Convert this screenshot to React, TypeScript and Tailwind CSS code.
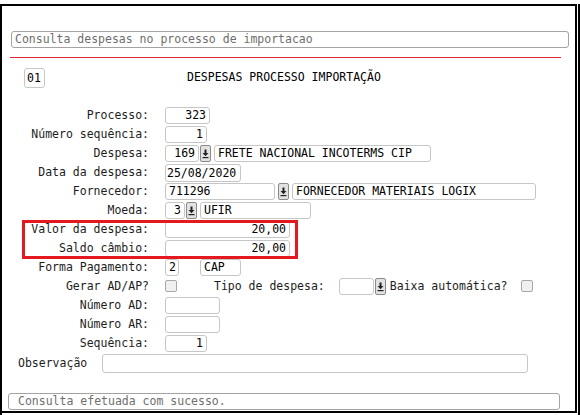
import React from "react";

const Field = ({ w, right, children }: { w: string; right?: boolean; children?: React.ReactNode }) => (
    <div className={`h-[17px] shrink-0 overflow-hidden whitespace-nowrap rounded-[3px] border border-[#c6c6c6] bg-white px-[3px] leading-[15px] text-black ${w} ${right ? "text-right" : "text-left"}`}>
        {children}
    </div>
);

const Drop = () => (
    <div className="flex h-[17px] w-[11px] shrink-0 items-center justify-center rounded-[2px] border border-[#8a8a8a] bg-[#e2e2e2]">
        <svg width="7" height="10" viewBox="0 0 7 10">
            <rect x="2.5" y="0.5" width="2" height="3.5" fill="#222" />
            <path d="M0.5 4 L6.5 4 L3.5 7.2 Z" fill="#222" />
            <rect x="0.5" y="8" width="6" height="1.2" fill="#222" />
        </svg>
    </div>
);

const Check = () => <div className="h-[12px] w-[12px] shrink-0 rounded-[2px] border border-[#a8a8a8] bg-[#f0f0f0]" />;

const Row = ({ label, children }: { label: string; children?: React.ReactNode }) => (
    <div className="flex h-[19px] items-start">
        <div className="w-[147px] shrink-0 text-right leading-[17px] text-[#1d1d1d]">{label}</div>
        <div className="ml-[16px] flex items-start">{children}</div>
    </div>
);

export default function App() {
    return (
        <div className="h-[415px] w-[580px] border-x-2 border-black bg-white font-['DejaVu_Sans_Mono',monospace] text-[11.5px]">
            <div className="mr-[1px] mt-[4px] flex h-[409px] flex-col border-y-2 border-r-2 border-black">
                <div className="ml-[9px] mr-[6px] mt-[25px] h-[17px] rounded-[3px] border border-[#a3a3a3] px-[3px] leading-[15px] text-[#6e6e6e]">
                    Consulta despesas no processo de importacao
                </div>
                <div className="ml-[8px] mt-[9px] h-px w-[551px] bg-[#e0262c]" />

                <div className="mt-[10px] flex items-center">
                    <div className="ml-[22px] h-[20px] w-[21px] rounded-[3px] border border-[#c6c6c6] px-[2px] leading-[18px] text-black">01</div>
                    <div className="ml-[142px] text-black">DESPESAS PROCESSO IMPORTAÇÃO</div>
                </div>

                <div className="mt-[19px] flex flex-col">
                    <Row label="Processo:">
                        <Field w="w-[45px]" right>323</Field>
                    </Row>
                    <Row label="Número sequência:">
                        <Field w="w-[42px]" right>1</Field>
                    </Row>
                    <Row label="Despesa:">
                        <Field w="w-[34px]" right>169</Field>
                        <div className="ml-[1px]"><Drop /></div>
                        <div className="ml-[3px]"><Field w="w-[217px]">FRETE NACIONAL INCOTERMS CIP</Field></div>
                    </Row>
                    <Row label="Data da despesa:">
                        <div className="h-[18px] w-[76px] rounded-[3px] border border-[#c6c6c6] px-[1px] leading-[16px] text-black">25/08/2020</div>
                    </Row>
                    <Row label="Fornecedor:">
                        <Field w="w-[110px]">711296</Field>
                        <div className="ml-[3px]"><Drop /></div>
                        <div className="ml-[3px]"><Field w="w-[244px]">FORNECEDOR MATERIAIS LOGIX</Field></div>
                    </Row>
                    <Row label="Moeda:">
                        <Field w="w-[20px]" right>3</Field>
                        <div className="ml-[1px]"><Drop /></div>
                        <div className="ml-[3px]"><Field w="w-[111px]">UFIR</Field></div>
                    </Row>
                    <div className="relative">
                        <Row label="Valor da despesa:">
                            <Field w="w-[125px]" right>20,00</Field>
                        </Row>
                        <Row label="Saldo câmbio:">
                            <Field w="w-[125px]" right>20,00</Field>
                        </Row>
                        <div className="absolute left-[20px] top-[-1px] h-[39px] w-[276px] border-[3px] border-[#e3191f]" />
                    </div>
                    <Row label="Forma Pagamento:">
                        <Field w="w-[14px]">2</Field>
                        <div className="ml-[21px]"><Field w="w-[41px]">CAP</Field></div>
                    </Row>
                    <Row label="Gerar AD/AP?">
                        <div className="mt-[2px]"><Check /></div>
                        <div className="ml-[37px] leading-[17px] text-[#1d1d1d]">Tipo de despesa:</div>
                        <div className="ml-[14px]"><Field w="w-[35px]" /></div>
                        <div className="ml-[1px]"><Drop /></div>
                        <div className="ml-[4px] leading-[17px] text-[#1d1d1d]">Baixa automática?</div>
                        <div className="ml-[14px] mt-[2px]"><Check /></div>
                    </Row>
                    <Row label="Número AD:">
                        <Field w="w-[55px]" />
                    </Row>
                    <Row label="Número AR:">
                        <Field w="w-[55px]" />
                    </Row>
                    <Row label="Sequência:">
                        <Field w="w-[42px]" right>1</Field>
                    </Row>
                    <div className="flex h-[19px] items-center">
                        <div className="ml-[16px] w-[84px] text-[#1d1d1d]">Observação</div>
                        <div className="h-[19px] w-[426px] rounded-[3px] border border-[#c6c6c6]" />
                    </div>
                </div>

                <div className="ml-[6px] mt-[20px] h-[17px] w-[552px] rounded-[3px] border border-[#a3a3a3] px-[9px] leading-[15px] text-[#6e6e6e]">
                    Consulta efetuada com sucesso.
                </div>
            </div>
        </div>
    );
}
